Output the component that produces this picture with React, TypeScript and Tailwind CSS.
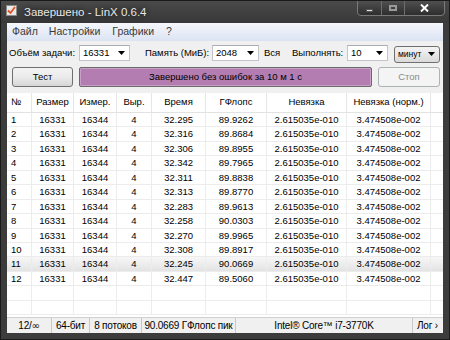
import React from "react";

const data: string[][] = [
  ["1", "32.295", "89.9262"],
  ["2", "32.316", "89.8684"],
  ["3", "32.306", "89.8955"],
  ["4", "32.342", "89.7965"],
  ["5", "32.311", "89.8838"],
  ["6", "32.313", "89.8770"],
  ["7", "32.283", "89.9613"],
  ["8", "32.258", "90.0303"],
  ["9", "32.270", "89.9965"],
  ["10", "32.308", "89.8917"],
  ["11", "32.245", "90.0669"],
  ["12", "32.447", "89.5060"],
];

const grid =
  "grid grid-cols-[25px_42px_43px_35px_54px_61px_80px_84px_1fr]";

function Arrow() {
  return (
    <svg width="7" height="4" viewBox="0 0 7 4" className="shrink-0">
      <path d="M0 0h7L3.5 4z" fill="#000" />
    </svg>
  );
}

function Combo({ value, w }: { value: string; w: string }) {
  return (
    <div
      className={`${w} h-[16px] bg-white border border-[#c2c6cc] border-t-[#a9adb3] flex items-center pl-[3px] pr-[4px] justify-between`}
    >
      <span>{value}</span>
      <Arrow />
    </div>
  );
}

export default function App() {
  const cell = "border-r border-[#ececec] flex items-end justify-center pb-[1px]";
  return (
    <div
      className="w-[450px] h-[340px] bg-[#3c3c3c] flex flex-col border border-[#1a1a1a] overflow-hidden text-[9.5px] text-black"
      style={{ fontFamily: '"Liberation Sans", Arial, sans-serif' }}
    >
      {/* title bar */}
      <div className="h-[22px] shrink-0 flex items-start relative bg-gradient-to-b from-[#4a4a4a] to-[#383838]">
        <div className="mt-[4px] ml-[5px] w-[11px] h-[11px] bg-[#e9e9e9] border border-[#8a8a8a] flex items-center justify-center">
          <svg width="9" height="9" viewBox="0 0 9 9">
            <path d="M1 4.5l2.5 2.5L8 1" stroke="#e0531f" strokeWidth="1.8" fill="none" />
          </svg>
        </div>
        <div
          className="ml-[7px] mt-[3px] text-[11.5px] text-[#e6e6e6]"
          style={{ textShadow: "0 0 6px rgba(0,0,0,0.9)" }}
        >
          Завершено - LinX 0.6.4
        </div>
        <div className="absolute right-[4px] top-[-1px] h-[16px] flex border border-[#7a7a7a] rounded-b-[4px] overflow-hidden bg-gradient-to-b from-[#505050] to-[#2e2e2e]">
          <div className="w-[24px] flex items-end justify-center pb-[3px] border-r border-[#6e6e6e]">
            <div className="w-[7px] h-[3px] bg-[#e0e0e0] border border-[#555]" />
          </div>
          <div className="w-[23px] flex items-center justify-center border-r border-[#6e6e6e]">
            <div className="w-[8px] h-[6px] border-2 border-[#9a9a9a]" />
          </div>
          <div className="w-[39px] flex items-center justify-center">
            <svg width="9" height="8" viewBox="0 0 9 8">
              <path d="M1 0.5l7 7M8 0.5l-7 7" stroke="#fff" strokeWidth="2" />
            </svg>
          </div>
        </div>
      </div>

      {/* client */}
      <div className="flex-1 flex flex-col mx-[6px] bg-[#f0f0f0] min-h-0">
        {/* menu */}
        <div className="h-[18px] shrink-0 flex items-center bg-gradient-to-b from-[#f5f7fc] to-[#dbe3f3] text-[#3a3a3a] text-[10.5px]">
          <span className="ml-[5px]">Файл</span>
          <span className="ml-[11px]">Настройки</span>
          <span className="ml-[12px]">Графики</span>
          <span className="ml-[12px]">?</span>
        </div>

        {/* row 1 */}
        <div className="mt-[4px] h-[16px] shrink-0 flex items-center pl-[2px]">
          <span className="w-[70px] shrink-0">Объём задачи:</span>
          <Combo value="16331" w="w-[51px]" />
          <span className="ml-[15px] w-[67px] shrink-0">Память (МиБ):</span>
          <Combo value="2048" w="w-[47px]" />
          <span className="ml-[5px] w-[28px] shrink-0">Вся</span>
          <span className="w-[55px] shrink-0">Выполнять:</span>
          <Combo value="10" w="w-[41px]" />
          <div className="ml-[6px] w-[46px] h-[17px] mt-[2px] rounded-[3px] border border-[#707070] bg-gradient-to-b from-[#f4f4f4] to-[#dadada] flex items-center justify-between pl-[3px] pr-[4px] text-[8.5px]">
            <span>минут</span>
            <Arrow />
          </div>
        </div>

        {/* row 2 */}
        <div className="mt-[6px] h-[20px] shrink-0 flex items-center pl-[5px]">
          <div className="w-[61px] h-[20px] rounded-[3px] border border-[#707070] bg-gradient-to-b from-[#f3f3f3] via-[#ebebeb] to-[#d6d6d6] flex items-center justify-center">
            Тест
          </div>
          <div className="ml-[6px] w-[293px] h-[20px] rounded-[2px] border border-[#6a6a6a] bg-[#b37db1] flex items-center justify-center shadow-[inset_0_0_0_1px_#c9a0c7]">
            Завершено без ошибок за 10 м 1 с
          </div>
          <div className="ml-[6px] w-[62px] h-[20px] rounded-[3px] border border-[#adb2b5] bg-[#f4f4f4] flex items-center justify-center text-[#8a8a8a]">
            Стоп
          </div>
        </div>

        {/* table */}
        <div className="mt-[6px] flex-1 flex flex-col bg-white min-h-0 border-b border-[#d0d0d0]">
          <div className={`${grid} h-[20px] shrink-0 border-b border-[#e2e2e2] bg-white`}>
            {["№", "Размер", "Измер.", "Выр.", "Время", "ГФлопс", "Невязка", "Невязка (норм.)", ""].map(
              (h, i) => (
                <div
                  key={i}
                  className={`flex items-center ${i === 0 ? "justify-start pl-[4px]" : "justify-center"} ${i < 8 ? "border-r border-[#e6e6e6]" : ""}`}
                >
                  {h}
                </div>
              )
            )}
          </div>
          {data.map((r) => (
            <div
              key={r[0]}
              className={`${grid} h-[14.45px] shrink-0 border-b border-[#ececec] ${r[0] === "11" ? "bg-gradient-to-b from-[#f7f7f7] to-[#e3e3e3]" : ""}`}
            >
              <div className="border-r border-[#ececec] flex items-end pl-[4px] pb-[1px]">{r[0]}</div>
              <div className={cell}>16331</div>
              <div className={cell}>16344</div>
              <div className={cell}>4</div>
              <div className={cell}>{r[1]}</div>
              <div className={cell}>{r[2]}</div>
              <div className={cell}>2.615035e-010</div>
              <div className={cell}>3.474508e-002</div>
              <div />
            </div>
          ))}
          {[0, 1].map((k) => (
            <div key={k} className={`${grid} h-[14.45px] shrink-0 border-b border-[#ececec]`}>
              {[0, 1, 2, 3, 4, 5, 6, 7].map((i) => (
                <div key={i} className="border-r border-[#ececec]" />
              ))}
              <div />
            </div>
          ))}
          <div className="flex-1" />
        </div>

        {/* status bar */}
        <div className="h-[15px] shrink-0 flex items-center bg-[#f0f0f0] text-[10px] tracking-[-0.2px] whitespace-nowrap">
          <div className="w-[45px] text-center border-r border-[#c8c8c8]">
            12/<span className="font-['DejaVu_Sans'] text-[10px]">∞</span>
          </div>
          <div className="w-[38px] text-center border-r border-[#c8c8c8]">64-бит</div>
          <div className="w-[52px] text-center border-r border-[#c8c8c8]">8 потоков</div>
          <div className="w-[94px] text-center border-r border-[#c8c8c8]">90.0669 ГФлопс пик</div>
          <div className="w-[177px] text-center border-r border-[#c8c8c8]">Intel® Core™ i7-3770K</div>
          <div className="flex-1 pl-[4px]">Лог ›</div>
        </div>
      </div>
      <div className="h-[6px] shrink-0" />
    </div>
  );
}
